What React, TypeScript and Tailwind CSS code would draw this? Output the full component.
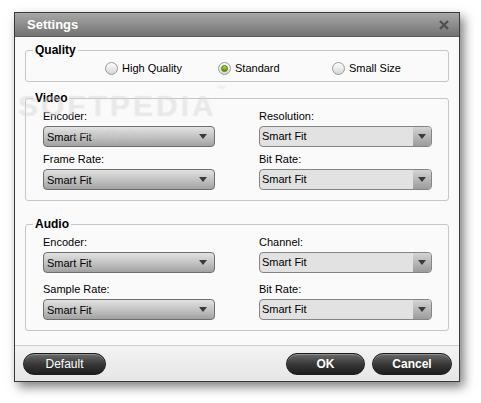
const font = { fontFamily: '"Liberation Sans", Arial, sans-serif' }

const Radio = ({ label, checked }: { label: string; checked?: boolean }) => (
  <div className="flex items-center gap-[4px]">
    <span className="flex h-[13px] w-[13px] items-center justify-center rounded-full border border-[#9a9a9a] bg-gradient-to-b from-[#fdfdfd] to-[#d6d6d6]">
      {checked && (
        <span className="h-[7px] w-[7px] rounded-full border border-[#4f7a00] bg-gradient-to-b from-[#b7e23a] to-[#5c8e00]" />
      )}
    </span>
    <span className="text-[11px] leading-[14px] text-black">{label}</span>
  </div>
)

const Arrow = () => (
  <svg width="8" height="5" viewBox="0 0 8 5" className="block">
    <path d="M0 0 H8 L4 5 Z" fill="#3a3a3a" />
  </svg>
)

// left column combo: glossy gradient
const ComboA = () => (
  <div className="flex h-[21px] items-center justify-between rounded-[4px] border border-[#6e6e6e] bg-gradient-to-b from-[#e2e2e2] via-[#c4c4c4] to-[#a2a2a2] pl-[3px] pr-[7px]">
    <span className="text-[11px] leading-[14px] text-black">Smart Fit</span>
    <Arrow />
  </div>
)

// right column combo: flat field with button
const ComboB = () => (
  <div className="flex h-[21px] overflow-hidden rounded-[4px] border border-[#858585] bg-[#e2e2e2]">
    <span className="flex-1 pl-[2px] text-[11px] leading-[19px] text-black">Smart Fit</span>
    <span className="flex w-[18px] items-center justify-center bg-gradient-to-b from-[#d4d4d4] to-[#9c9c9c]">
      <Arrow />
    </span>
  </div>
)

const Field = ({ label, right }: { label: string; right?: boolean }) => (
  <div className="flex flex-col gap-[3px]">
    <span className="text-[11px] leading-[14px] text-black">{label}</span>
    {right ? <ComboB /> : <ComboA />}
  </div>
)

const Button = ({ label, bold, w }: { label: string; bold?: boolean; w: string }) => (
  <button
    className={`h-[22px] ${w} rounded-full border border-[#1c1c1c] bg-gradient-to-b from-[#6c6c6c] via-[#393939] to-[#1d1d1d] text-[12px] text-white shadow-[inset_0_1px_0_rgba(255,255,255,0.25)] ${bold ? 'font-bold' : ''}`}
  >
    {label}
  </button>
)

const App = () => {
  return (
    <div className="min-h-[403px] bg-white pl-[14px] pt-[12px]" style={font}>
      <div className="relative flex h-[370px] w-[446px] flex-col border border-[#3a3a3a] bg-[#fafafa] shadow-[4px_5px_10px_rgba(0,0,0,0.5)]">
        {/* title bar */}
        <div className="flex h-[24px] items-center justify-between border-b border-[#5a5a5a] bg-gradient-to-b from-[#a8a8a8] to-[#737373] pl-[12px] pr-[10px]">
          <span className="text-[13px] font-bold text-white">Settings</span>
          <svg width="10" height="10" viewBox="0 0 10 10">
            <path d="M1 1 L9 9 M9 1 L1 9" stroke="#505050" strokeWidth="2.4" />
          </svg>
        </div>

        <div className="flex flex-1 flex-col px-[10px] pt-[6px]">
          {/* Quality */}
          <fieldset className="rounded-[3px] border border-[#c6c6c6] px-[17px] pb-[6px]">
            <legend className="ml-[-10px] px-[2px] text-[12px] font-bold leading-[14px] text-black">Quality</legend>
            <div className="box-content flex h-[14px] items-center pl-[62px] pt-[4px]">
              <div className="w-[113px]"><Radio label="High Quality" /></div>
              <div className="w-[114px]"><Radio label="Standard" checked /></div>
              <Radio label="Small Size" />
            </div>
          </fieldset>

          {/* Video */}
          <fieldset className="mt-[9px] rounded-[3px] border border-[#c6c6c6] pb-[10px] pl-[17px] pr-[16px]">
            <legend className="ml-[-10px] px-[2px] text-[12px] font-bold leading-[14px] text-black">Video</legend>
            <div className="grid grid-cols-[172px_173px] gap-x-[44px] gap-y-[5px] pt-[4px]">
              <Field label="Encoder:" />
              <Field label="Resolution:" right />
              <Field label="Frame Rate:" />
              <Field label="Bit Rate:" right />
            </div>
          </fieldset>

          {/* Audio */}
          <fieldset className="mt-[16px] rounded-[3px] border border-[#c6c6c6] pb-[10px] pl-[17px] pr-[16px]">
            <legend className="ml-[-10px] px-[2px] text-[12px] font-bold leading-[14px] text-black">Audio</legend>
            <div className="grid grid-cols-[172px_173px] gap-x-[44px] gap-y-[9px] pt-[4px]">
              <Field label="Encoder:" />
              <Field label="Channel:" right />
              <Field label="Sample Rate:" />
              <Field label="Bit Rate:" right />
            </div>
          </fieldset>
        </div>

        {/* footer */}
        <div className="flex h-[36px] items-center border-t border-[#cfcfcf] bg-gradient-to-b from-[#f3f3f3] to-[#e6e6e6] pl-[8px] pr-[7px]">
          <Button label="Default" w="w-[83px]" />
          <div className="ml-auto flex gap-[7px]">
            <Button label="OK" bold w="w-[79px]" />
            <Button label="Cancel" bold w="w-[80px]" />
          </div>
        </div>

        {/* faint watermark overlay */}
        <div className="pointer-events-none absolute left-[3px] top-[70px] text-[30px] font-bold tracking-[3px] text-white/40 [text-shadow:0_0_1px_rgba(0,0,0,0.12)]">
          SOFTPEDIA<span className="align-top text-[9px]">™</span>
        </div>
        <div className="pointer-events-none absolute left-[58px] top-[114px] text-[10px] text-white/40 [text-shadow:0_0_1px_rgba(0,0,0,0.15)]">
          www.softpedia.com
        </div>
      </div>
    </div>
  )
}

export default App
